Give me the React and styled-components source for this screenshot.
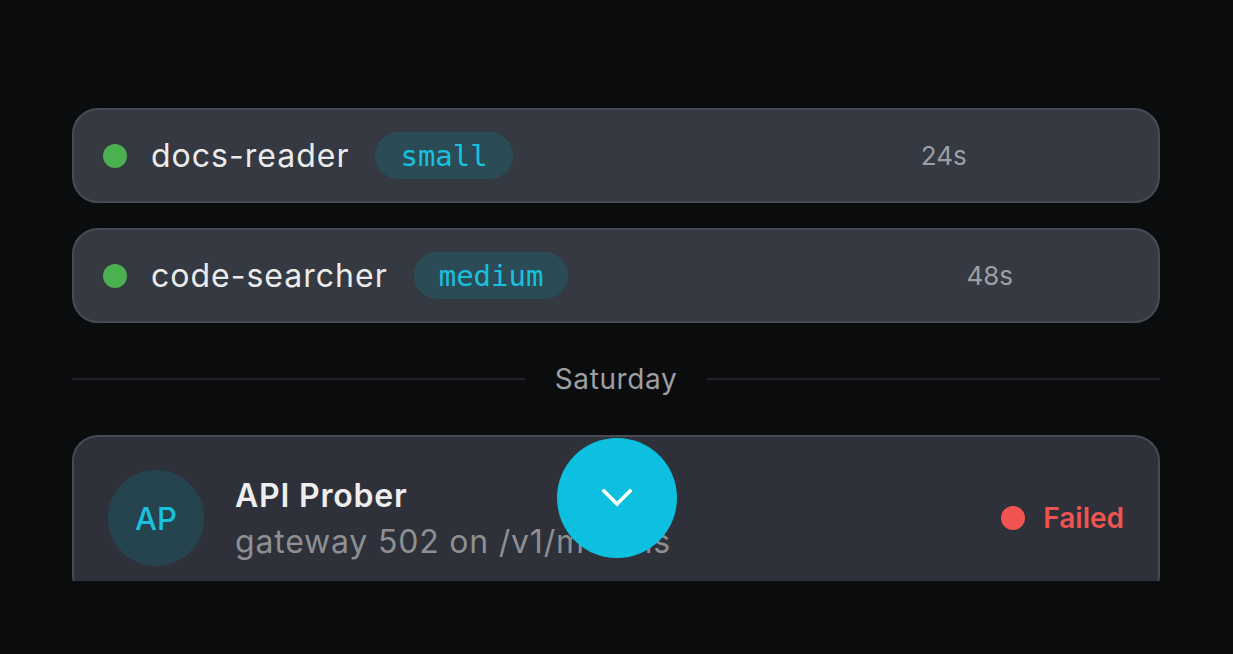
import styled, { createGlobalStyle } from "styled-components"

const GlobalStyle = createGlobalStyle`
  html, body {
    margin: 0;
    padding: 0;
    background: #0b0c0e;
    font-family: Inter, "Noto Sans", sans-serif;
  }
`

const Page = styled.div`
  position: relative;
  width: 1233px;
  height: 654px;
  box-sizing: border-box;
  padding: 108px 73px 0 72px;
  background: #0b0c0e;
`

const Viewport = styled.div`
  height: 473px;
  overflow: hidden;
  display: flex;
  flex-direction: column;
  gap: 25px;
`

const Card = styled.div`
  flex-shrink: 0;
  box-sizing: border-box;
  height: ${(p) => p.$tall ? "166px" : "95px"};
  display: flex;
  align-items: center;
  padding: 0 34px 0 29px;
  border: 2px solid #464b55;
  border-radius: 26px;
  background: ${(p) => p.$tall ? "#2e3139" : "#343942"};
`

const Dot = styled.span`
  flex-shrink: 0;
  width: 24px;
  height: 24px;
  border-radius: 50%;
  background: ${(p) => p.$color};
`

const Name = styled.span`
  margin-left: 24px;
  font-size: 32px;
  letter-spacing: 1px;
  color: #ebebeb;
`

const Badge = styled.span`
  margin-left: 26px;
  height: 47px;
  display: inline-flex;
  align-items: center;
  padding: 0 25px;
  border-radius: 24px;
  background: #2b4c57;
  color: #19c0df;
  font-family: "DejaVu Sans Mono", monospace;
  font-size: 29px;
`

const Duration = styled.span`
  margin-left: ${(p) => p.$offset}px;
  font-size: 26px;
  color: #9d9fa3;
`

const Divider = styled.div`
  flex-shrink: 0;
  display: flex;
  align-items: center;
  gap: 30px;
  height: 62px;
  color: #9d9fa3;
  font-size: 28px;
  letter-spacing: 0.6px;

  &::before, &::after {
    content: "";
    flex: 1;
    height: 2px;
    background: #1f2125;
  }
`

const Avatar = styled.div`
  flex-shrink: 0;
  width: 96px;
  height: 96px;
  margin-left: 5px;
  border-radius: 50%;
  background: #26444f;
  color: #19c0df;
  display: flex;
  align-items: center;
  justify-content: center;
  font-size: 31px;
  font-weight: 500;
`

const Info = styled.div`
  flex: 1;
  display: flex;
  flex-direction: column;
  gap: 7px;
  margin-left: 31px;
  margin-top: 1px;
`

const Title = styled.div`
  font-size: 32px;
  letter-spacing: 0.8px;
  font-weight: 600;
  color: #eeeeee;
`

const Subtitle = styled.div`
  font-size: 32px;
  letter-spacing: 0.8px;
  color: #8d8f93;
`

const Status = styled.div`
  display: flex;
  align-items: center;
  gap: 18px;
  color: #ef5451;
  font-size: 28px;
  font-weight: 600;
`

const Fab = styled.button`
  position: absolute;
  left: 557px;
  top: 438px;
  width: 120px;
  height: 120px;
  border: none;
  border-radius: 50%;
  background: #0ec0df;
  display: flex;
  align-items: center;
  justify-content: center;
  padding: 0;
  cursor: pointer;
`

const rows = [
  { name: "docs-reader", size: "small", time: "24s", offset: 408 },
  { name: "code-searcher", size: "medium", time: "48s", offset: 398 },
]

const App = () => {
  return (
    <>
      <GlobalStyle />
      <Page>
        <Viewport>
          {rows.map((r) => (
            <Card key={r.name}>
              <Dot $color="#4caf50" />
              <Name>{r.name}</Name>
              <Badge>{r.size}</Badge>
              <Duration $offset={r.offset}>{r.time}</Duration>
            </Card>
          ))}
          <Divider>Saturday</Divider>
          <Card $tall>
            <Avatar>AP</Avatar>
            <Info>
              <Title>API Prober</Title>
              <Subtitle>gateway 502 on /v1/models</Subtitle>
            </Info>
            <Status>
              <Dot $color="#ef5451" />
              Failed
            </Status>
          </Card>
        </Viewport>
        <Fab aria-label="Scroll down">
          <svg width="32" height="20" viewBox="0 0 32 20">
            <path d="M3 3 L16 16 L29 3" fill="none" stroke="#fff" strokeWidth="3.6" strokeLinecap="square" />
          </svg>
        </Fab>
      </Page>
    </>
  )
}

export default App
